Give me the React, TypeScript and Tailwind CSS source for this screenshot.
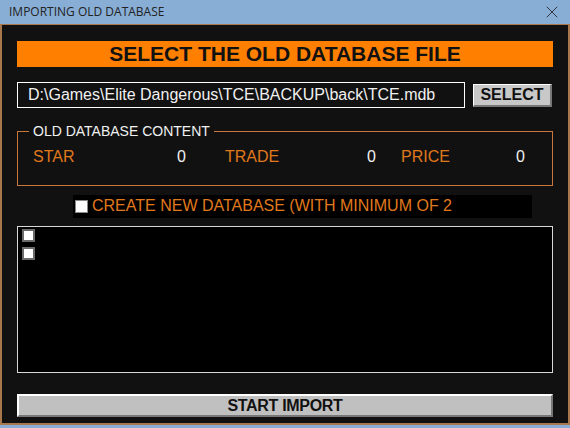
import { X } from 'lucide-react';

const stats = [
  { label: 'STAR', value: 0 },
  { label: 'TRADE', value: 0 },
  { label: 'PRICE', value: 0 },
];

function Box() {
  return (
    <span className="block w-[13px] h-[13px] bg-white border-2 border-[#6b6b6b]" />
  );
}

export default function App() {
  return (
    <div
      className="w-[570px] h-[428px] bg-[#88aed6] flex flex-col"
      style={{ fontFamily: '"Liberation Sans", Arial, sans-serif' }}
    >
      <div className="h-[24px] flex items-center justify-between pl-[9px] pr-[8px] text-[12px] text-[#222]">
        <span style={{ fontFamily: '"Open Sans", "Liberation Sans", sans-serif' }}>IMPORTING OLD DATABASE</span>
        <X size={20} strokeWidth={1} className="text-[#222]" />
      </div>

      <div className="h-[401px] bg-[#111] border-x-2 border-t border-b-2 border-[#a8784c] flex flex-col px-[15px]">
        <div className="mt-[16px] h-[26px] bg-[#ff8000] flex items-center justify-center text-[21px] font-bold text-[#111]">
          SELECT THE OLD DATABASE FILE
        </div>

        <div className="mt-[15px] flex items-center justify-between">
          <div className="w-[448px] h-[26px] border border-white flex items-center pl-[10px] text-[16px] text-[#f0f0f0]">
            D:\Games\Elite Dangerous\TCE\BACKUP\back\TCE.mdb
          </div>
          <button className="mr-[1px] w-[79px] h-[23px] bg-[#c8c8c8] border-t border-l border-white border-r-2 border-b-2 border-r-[#777] border-b-[#777] text-[16px] font-bold text-[#111] flex items-center justify-center">
            SELECT
          </button>
        </div>

        <fieldset className="mt-[15px] h-[63px] border border-[#c8783a] px-[15px]">
          <legend className="ml-[-4px] px-[4px] text-[14px] leading-[16px] text-[#f0f0f0]">
            OLD DATABASE CONTENT
          </legend>
          <div className="mt-[6px] flex items-center text-[16px]">
            {stats.map((s, i) => (
              <div
                key={s.label}
                className={`flex items-center justify-between ${
                  i === 0 ? 'w-[153px] mr-[39px]' : i === 1 ? 'w-[151px] mr-[25px]' : 'w-[124px]'
                }`}
              >
                <span className="text-[#e0781c]">{s.label}</span>
                <span className="text-[#f0f0f0]">{s.value}</span>
              </div>
            ))}
          </div>
        </fieldset>

        <div className="mt-[9px] ml-[56px] w-[459px] h-[23px] bg-black flex items-center pl-[2px]">
          <span className="block w-[13px] h-[13px] bg-white border border-[#888]" />
          <span className="ml-[4px] mb-[1px] text-[16px] leading-[18px] text-[#e0781c]">
            CREATE NEW DATABASE (WITH MINIMUM OF 2
          </span>
        </div>

        <div className="mt-[8px] w-[536px] h-[147px] bg-black border border-[#d8d8d8] flex flex-col gap-[5px] pt-[2px] pl-[4px]">
          <Box />
          <Box />
        </div>

        <button className="mt-[21px] w-[536px] h-[23px] bg-[#c0c0c0] border-t-2 border-l-2 border-white border-r-2 border-b-2 border-r-[#777] border-b-[#777] text-[16px] tracking-[-0.3px] font-bold text-[#111] flex items-center justify-center">
          START IMPORT
        </button>
      </div>
    </div>
  );
}
